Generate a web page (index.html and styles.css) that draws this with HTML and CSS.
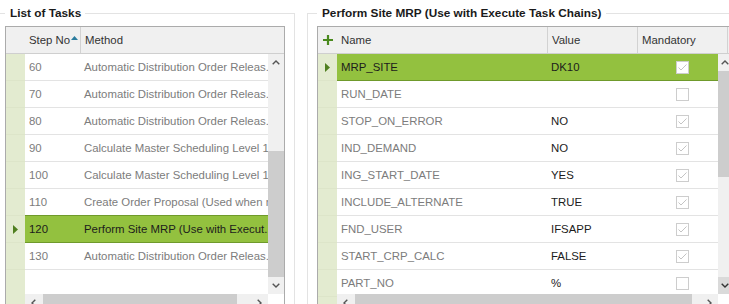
FILE: index.html
```html
<!DOCTYPE html>
<html>
<head>
<meta charset="utf-8">
<link rel="stylesheet" href="styles.css">
</head>
<body>
<div class="page">
  <fieldset class="panel panel-left">
    <legend>List of Tasks</legend>
    <div class="grid grid-left">
      <div class="ghead">
        <div class="hstrip"></div>
        <div class="hcell h-step">Step No<svg class="sort" width="7" height="4" viewBox="0 0 7 4"><polygon points="0,4 3.5,0 7,4" fill="#2b7c9e"/></svg></div>
        <div class="hcell h-method">Method</div>
      </div>
      <div class="gbody gbody-left">
        <div class="strip">
          <div class="mark"></div><div class="mark"></div><div class="mark"></div><div class="mark"></div>
          <div class="mark"></div><div class="mark"></div>
          <div class="mark"><svg width="5" height="9" viewBox="0 0 5 9"><polygon points="0,0 5,4.5 0,9" fill="#4f7f1f"/></svg></div>
          <div class="mark"></div>
        </div>
        <div class="rows">
          <div class="row"><div class="cell c-step">60</div><div class="cell c-method">Automatic Distribution Order Releas...</div></div>
          <div class="row"><div class="cell c-step">70</div><div class="cell c-method">Automatic Distribution Order Releas...</div></div>
          <div class="row"><div class="cell c-step">80</div><div class="cell c-method">Automatic Distribution Order Releas...</div></div>
          <div class="row"><div class="cell c-step">90</div><div class="cell c-method">Calculate Master Scheduling Level 1...</div></div>
          <div class="row"><div class="cell c-step">100</div><div class="cell c-method">Calculate Master Scheduling Level 1...</div></div>
          <div class="row"><div class="cell c-step">110</div><div class="cell c-method">Create Order Proposal (Used when running...</div></div>
          <div class="row sel"><div class="cell c-step">120</div><div class="cell c-method">Perform Site MRP (Use with Execut...</div></div>
          <div class="row"><div class="cell c-step">130</div><div class="cell c-method">Automatic Distribution Order Releas...</div></div>
        </div>
        <div class="vscroll vs-left">
          <div class="sarrow"><svg width="8" height="5" viewBox="0 0 8 5"><polyline points="0.7,4.3 4,1 7.3,4.3" fill="none" stroke="#555" stroke-width="1.4"/></svg></div>
          <div class="vtrack"><div class="vthumb"></div></div>
          <div class="sarrow"><svg width="8" height="5" viewBox="0 0 8 5"><polyline points="0.7,0.7 4,4 7.3,0.7" fill="none" stroke="#555" stroke-width="1.4"/></svg></div>
        </div>
        <div class="hscroll hs-left">
          <div class="harrow"><svg width="5" height="8" viewBox="0 0 5 8"><polyline points="4.3,0.7 1,4 4.3,7.3" fill="none" stroke="#555" stroke-width="1.4"/></svg></div>
          <div class="hthumb"></div>
          <div class="htrack"></div>
          <div class="harrow"><svg width="5" height="8" viewBox="0 0 5 8"><polyline points="0.7,0.7 4,4 0.7,7.3" fill="none" stroke="#555" stroke-width="1.4"/></svg></div>
        </div>
        <div class="corner"></div>
      </div>
    </div>
  </fieldset>

  <fieldset class="panel panel-right">
    <legend>Perform Site MRP (Use with Execute Task Chains)</legend>
    <div class="grid grid-right">
      <div class="ghead">
        <div class="hstrip"><svg width="10" height="10" viewBox="0 0 10 10"><path d="M5 0V10M0 5H10" stroke="#4a8a1e" stroke-width="2.2"/></svg></div>
        <div class="hcell h-name">Name</div>
        <div class="hcell h-value">Value</div>
        <div class="hcell h-mand">Mandatory</div>
      </div>
      <div class="gbody gbody-right">
        <div class="strip">
          <div class="mark"><svg width="5" height="9" viewBox="0 0 5 9"><polygon points="0,0 5,4.5 0,9" fill="#4f7f1f"/></svg></div>
          <div class="mark"></div><div class="mark"></div><div class="mark"></div><div class="mark"></div>
          <div class="mark"></div><div class="mark"></div><div class="mark"></div><div class="mark"></div>
        </div>
        <div class="rows">
          <div class="row sel"><div class="cell c-name">MRP_SITE</div><div class="cell c-value">DK10</div><div class="cell c-mand"><span class="cb"><svg width="11" height="11" viewBox="0 0 11 11"><polyline points="1.5,5.5 4,8 9.5,2.5" fill="none" stroke="#c4c4c4" stroke-width="1"/></svg></span></div></div>
          <div class="row"><div class="cell c-name">RUN_DATE</div><div class="cell c-value"></div><div class="cell c-mand"><span class="cb"></span></div></div>
          <div class="row"><div class="cell c-name">STOP_ON_ERROR</div><div class="cell c-value">NO</div><div class="cell c-mand"><span class="cb"><svg width="11" height="11" viewBox="0 0 11 11"><polyline points="1.5,5.5 4,8 9.5,2.5" fill="none" stroke="#c4c4c4" stroke-width="1"/></svg></span></div></div>
          <div class="row"><div class="cell c-name">IND_DEMAND</div><div class="cell c-value">NO</div><div class="cell c-mand"><span class="cb"><svg width="11" height="11" viewBox="0 0 11 11"><polyline points="1.5,5.5 4,8 9.5,2.5" fill="none" stroke="#c4c4c4" stroke-width="1"/></svg></span></div></div>
          <div class="row"><div class="cell c-name">ING_START_DATE</div><div class="cell c-value">YES</div><div class="cell c-mand"><span class="cb"><svg width="11" height="11" viewBox="0 0 11 11"><polyline points="1.5,5.5 4,8 9.5,2.5" fill="none" stroke="#c4c4c4" stroke-width="1"/></svg></span></div></div>
          <div class="row"><div class="cell c-name">INCLUDE_ALTERNATE</div><div class="cell c-value">TRUE</div><div class="cell c-mand"><span class="cb"><svg width="11" height="11" viewBox="0 0 11 11"><polyline points="1.5,5.5 4,8 9.5,2.5" fill="none" stroke="#c4c4c4" stroke-width="1"/></svg></span></div></div>
          <div class="row"><div class="cell c-name">FND_USER</div><div class="cell c-value">IFSAPP</div><div class="cell c-mand"><span class="cb"><svg width="11" height="11" viewBox="0 0 11 11"><polyline points="1.5,5.5 4,8 9.5,2.5" fill="none" stroke="#c4c4c4" stroke-width="1"/></svg></span></div></div>
          <div class="row"><div class="cell c-name">START_CRP_CALC</div><div class="cell c-value">FALSE</div><div class="cell c-mand"><span class="cb"><svg width="11" height="11" viewBox="0 0 11 11"><polyline points="1.5,5.5 4,8 9.5,2.5" fill="none" stroke="#c4c4c4" stroke-width="1"/></svg></span></div></div>
          <div class="row"><div class="cell c-name">PART_NO</div><div class="cell c-value">%</div><div class="cell c-mand"><span class="cb"></span></div></div>
        </div>
        <div class="vscroll vs-right">
          <div class="sarrow"><svg width="8" height="5" viewBox="0 0 8 5"><polyline points="0.7,4.3 4,1 7.3,4.3" fill="none" stroke="#555" stroke-width="1.4"/></svg></div>
          <div class="vtrack"><div class="vthumb"></div></div>
          <div class="sarrow sarrow-hot"><svg width="8" height="5" viewBox="0 0 8 5"><polyline points="0.7,0.7 4,4 7.3,0.7" fill="none" stroke="#333" stroke-width="1.4"/></svg></div>
        </div>
        <div class="hscroll hs-right">
          <div class="harrow"><svg width="5" height="8" viewBox="0 0 5 8"><polyline points="4.3,0.7 1,4 4.3,7.3" fill="none" stroke="#555" stroke-width="1.4"/></svg></div>
          <div class="hthumb"></div>
          <div class="htrack"></div>
          <div class="harrow"><svg width="5" height="8" viewBox="0 0 5 8"><polyline points="0.7,0.7 4,4 0.7,7.3" fill="none" stroke="#555" stroke-width="1.4"/></svg></div>
        </div>
        <div class="corner"></div>
      </div>
    </div>
  </fieldset>
</div>
</body>
</html>
```
FILE: styles.css
```css
html, body {
  margin: 0;
  padding: 0;
}
body {
  width: 729px;
  height: 304px;
  overflow: hidden;
  background: #fff;
  font-family: "Liberation Sans", Arial, sans-serif;
  font-size: 11.4px;
  color: #222;
}
.page {
  display: flex;
  gap: 12px;
  margin-left: -5px;
}
.panel {
  margin: 0;
  border: 1px solid #e3e3e3;
  padding: 0 9px;
  min-width: 0;
  height: 330px;
  box-sizing: border-box;
  flex: none;
}
.panel-left { width: 300px; }
.panel-right { width: 440px; }
legend {
  font-weight: bold;
  font-size: 11.8px;
  line-height: 26px;
  padding: 0 4px 0 5px;
  color: #1a1a1a;
}
.grid {
  border: 1px solid #ababab;
  box-sizing: border-box;
  overflow: hidden;
}
.grid-left { width: 280px; }
.grid-right { width: 419px; }

.ghead {
  display: flex;
  height: 26px;
  background: #f0f0f0;
  border-bottom: 1px solid #cfcfcf;
  color: #333;
}
.hstrip {
  width: 19px;
  flex: none;
  display: flex;
  align-items: center;
  justify-content: center;
}
.hcell {
  flex: none;
  display: flex;
  align-items: center;
  padding-left: 4px;
  box-sizing: border-box;
  border-right: 1px solid #d2d2d2;
  white-space: nowrap;
}
.h-step { width: 56px; }
.h-method { width: 200px; border-right: none; }
.sort { margin-left: 1px; margin-top: -4px; }
.h-name { width: 211px; }
.h-value { width: 90px; }
.h-mand { width: 90px; }

.gbody {
  display: grid;
  grid-template-rows: 240px 17px;
}
.gbody-left { grid-template-columns: 19px 243px 16px; }
.gbody-right { grid-template-columns: 19px 381px 17px; }

.strip {
  grid-row: 1 / 3;
  background: #e3ebd0;
}
.mark {
  height: 26px;
  border-bottom: 1px solid #dde5c9;
  display: flex;
  align-items: center;
  padding-left: 7px;
}
.rows {
  overflow: hidden;
  background: #fff;
}
.row {
  display: flex;
  height: 26px;
  border-bottom: 1px solid #e3e3e3;
  align-items: center;
  white-space: nowrap;
  color: #7c7c7c;
}
.row.sel {
  background: #93c13f;
  border-bottom-color: #6f9a2b;
  box-shadow: 0 -1px 0 #6f9a2b;
  color: #1c1c1c;
}
.cell {
  flex: none;
  padding-left: 4px;
  box-sizing: border-box;
  overflow: hidden;
}
.c-step { width: 55px; }
.c-method { width: 205px; }
.c-name { width: 210px; }
.c-value { width: 90px; color: #1c1c1c; }
.c-mand {
  width: 90px;
  padding-left: 0;
  display: flex;
  justify-content: center;
}
.cb {
  width: 11px;
  height: 11px;
  border: 1px solid #cdcdcd;
  background: #fff;
  display: block;
}
.cb svg { display: block; }

.vscroll {
  background: #f0f0f0;
  display: flex;
  flex-direction: column;
}
.sarrow {
  height: 17px;
  flex: none;
  display: flex;
  align-items: center;
  justify-content: center;
}
.vtrack { flex: 1; }
.vthumb { background: #cdcdcd; }
.vs-left .vtrack { padding-top: 80px; }
.vs-left .vthumb { height: 126px; }
.vs-left .sarrow { padding-right: 1px; }
.vs-right .vtrack { padding-top: 0; }
.vs-right .vthumb { height: 106px; }
.vs-right .sarrow { justify-content: flex-start; padding-left: 3px; }
.sarrow-hot { background: #dadada; }

.hscroll {
  background: #f0f0f0;
  display: flex;
  align-items: stretch;
}
.harrow {
  width: 17px;
  flex: none;
  display: flex;
  align-items: center;
  justify-content: center;
}
.hthumb {
  background: #cdcdcd;
  margin-left: 1px;
  flex: none;
}
.hs-left .hthumb { width: 194px; }
.hs-right .hthumb { width: 337px; }
.htrack { flex: 1; }
.corner { background: #fff; }
```
